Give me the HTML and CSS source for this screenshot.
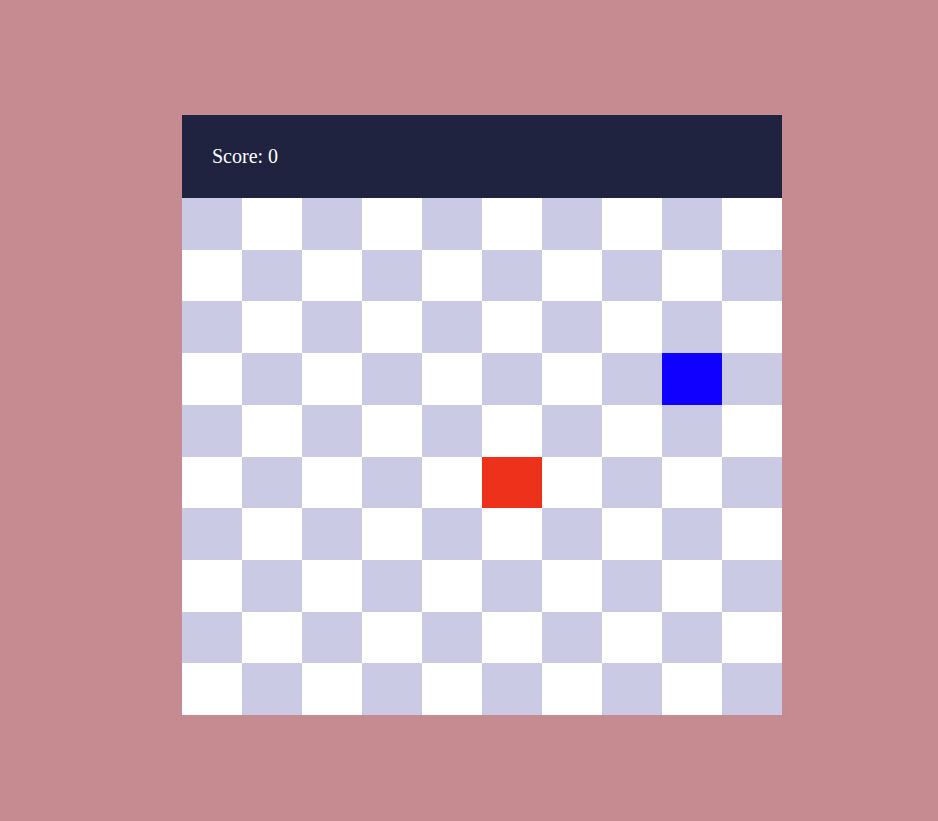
FILE: index.html
```html
<!DOCTYPE html>
<html>
<head>
<meta charset="utf-8">
<link rel="stylesheet" href="styles.css">
</head>
<body>
<div class="game">
  <div class="header"><span class="score">Score: 0</span></div>
  <div class="board" id="board"></div>
</div>
<script>
  var b = document.getElementById('board');
  for (var r = 0; r < 10; r++) {
    for (var c = 0; c < 10; c++) {
      var d = document.createElement('div');
      d.className = 'cell ' + ((r + c) % 2 === 0 ? 'dark' : 'light');
      if (r === 3 && c === 8) d.className = 'cell player';
      if (r === 5 && c === 5) d.className = 'cell food';
      b.appendChild(d);
    }
  }
</script>
</body>
</html>
```
FILE: styles.css
```css
html, body {
  margin: 0;
  padding: 0;
  background: #c68a91;
  height: 100%;
}
body {
  padding: 115px 0 0 182px;
  box-sizing: border-box;
}
.game {
  width: 600px;
  height: 600px;
  display: flex;
  flex-direction: column;
}
.header {
  height: 83px;
  flex: none;
  background: #20233f;
  display: flex;
  align-items: center;
  padding-left: 30px;
  box-sizing: border-box;
}
.score {
  color: #ffffff;
  font-family: "Liberation Serif", "Times New Roman", serif;
  font-size: 20px;
}
.board {
  flex: 1;
  display: grid;
  grid-template-columns: repeat(10, 1fr);
  grid-template-rows: repeat(10, 1fr);
}
.cell.dark { background: #cacae4; }
.cell.light { background: #ffffff; }
.cell.player { background: #1000ff; }
.cell.food { background: #ee311b; }
```
